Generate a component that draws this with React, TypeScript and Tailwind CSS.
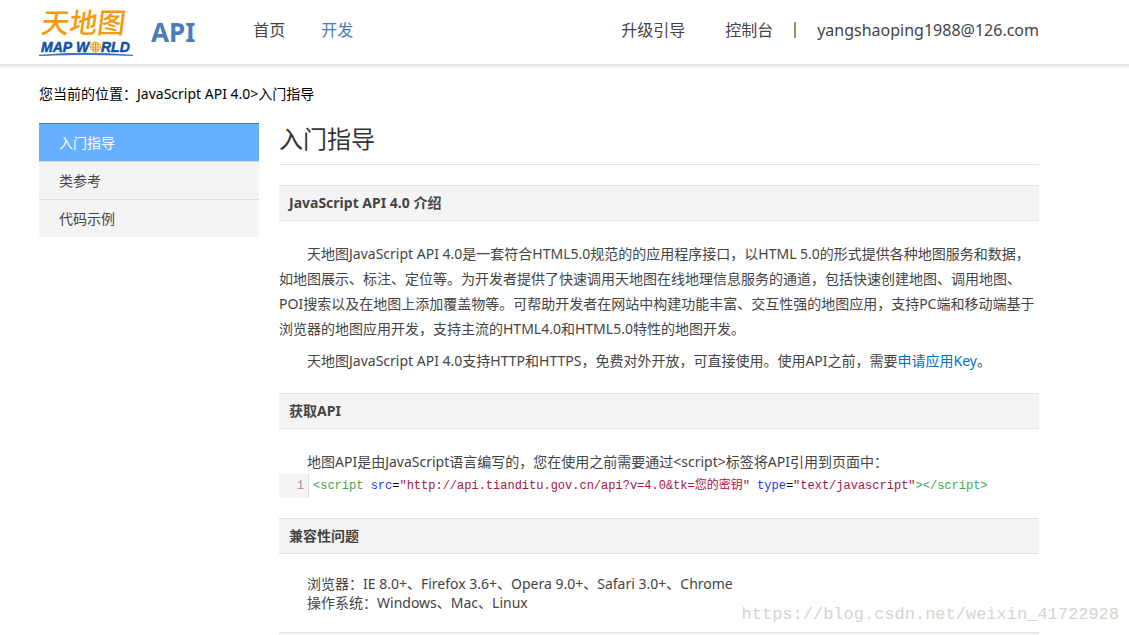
import type { ReactNode } from "react";

const menuLateral = ["入门指导", "类参考", "代码示例"];

function Logo() {
  return (
    <svg
      viewBox="0 0 96 64"
      className="h-16 w-24 shrink-0"
      role="img"
      aria-label="天地图 MAP WORLD"
    >
      <g
        fill="#f59a0c"
        fontWeight="500"
        fontFamily="'Noto Sans CJK SC', sans-serif"
        transform="skewX(-8)"
      >
        <text x="6" y="33" fontSize="28">
          天地图
        </text>
      </g>
      <g
        fill="#0f52a5"
        stroke="#0f52a5"
        strokeWidth="0.5"
        fontSize="14"
        fontWeight="700"
        fontStyle="italic"
        fontFamily="'Liberation Sans', sans-serif"
      >
        <text x="2" y="52">
          MAP
        </text>
        <text x="37" y="52">
          W
        </text>
        <text x="62" y="52">
          RLD
        </text>
      </g>
      <g fill="none" stroke="#f59a0c" strokeWidth="1">
        <ellipse cx="56.5" cy="47" rx="5.2" ry="4.8" fill="#fff" />
        <ellipse cx="56.5" cy="47" rx="2.4" ry="4.8" />
        <path d="M51.5 47h10M52.5 44.6h8M52.5 49.4h8M56.5 42.4v9.2" />
      </g>
      <path
        d="M0 55.4Q46 51 94 55.4Q46 53.4 0 55.4Z"
        fill="#0f52a5"
        stroke="#2a6fb8"
        strokeWidth="0.8"
      />
    </svg>
  );
}

function Cabecera() {
  return (
    <header className="border-b-2 border-[#e7e7e7] bg-white">
      <div className="mr-[90px] ml-[39px] flex h-16 items-center">
        <a href="#inicio" className="flex items-center">
          <Logo />
          <span className="ml-4 text-[26px] leading-8 font-bold text-[#4a7dba]">
            API
          </span>
        </a>
        <nav className="ml-[58px] flex gap-9 pb-1 text-base leading-6">
          <a href="#inicio">首页</a>
          <a href="#desarrollo" className="text-[#4a7dba]">
            开发
          </a>
        </nav>
        <div className="ml-auto flex items-center pb-1 text-base leading-6">
          <a href="#actualizar">升级引导</a>
          <a href="#consola" className="ml-10">
            控制台
          </a>
          <span className="mx-[21px] h-4 w-0.5 bg-[#b08a5a]" />
          <a href="#cuenta">yangshaoping1988@126.com</a>
        </div>
      </div>
    </header>
  );
}

function Titulo({ children }: { children: ReactNode }) {
  return (
    <h2 className="border-y border-[#e3e3e3] bg-[#f4f4f4] pl-[10px] text-sm leading-[34px] font-bold">
      {children}
    </h2>
  );
}

function Codigo() {
  return (
    <div className="flex font-['Liberation_Mono','Noto_Sans_CJK_SC',monospace] text-xs leading-6">
      <span className="w-[30px] shrink-0 border-r border-[#dddddd] bg-[#f4f4f4] pr-1 text-right text-[#999999]">
        1
      </span>
      <code className="pl-1 font-['Liberation_Mono','Noto_Sans_CJK_SC',monospace] whitespace-nowrap text-[#a31545]">
        <span className="text-[#3cab50]">&lt;script</span>{" "}
        <span className="text-[#1a3cff]">src</span>
        <span className="text-black">=</span>
        "http://api.tianditu.gov.cn/api?v=4.0&amp;tk=您的密钥"{" "}
        <span className="text-[#1a3cff]">type</span>
        <span className="text-black">=</span>"text/javascript"
        <span className="text-[#3cab50]">&gt;&lt;/script&gt;</span>
      </code>
    </div>
  );
}

function App() {
  return (
    <div className="relative bg-white font-['Noto_Sans','Noto_Sans_CJK_SC',sans-serif] text-[#444444]">
      <Cabecera />
      <div className="h-0.5 bg-[#f4f4f4]" />

      <div className="mr-[90px] ml-[39px]">
        <p className="pt-4 pb-[19px] text-sm leading-5 text-black">
          您当前的位置：JavaScript API 4.0&gt;入门指导
        </p>

        <div className="flex items-start gap-5">
          <aside className="w-[220px] shrink-0">
            <ul className="text-sm leading-[37px]">
              {menuLateral.map((item, i) => (
                <li key={item}>
                  <a
                    href={`#seccion-${i}`}
                    className={
                      i === 0
                        ? "block border-t border-[#3f7fbd] bg-[#66b0ff] pl-5 text-white"
                        : "block border-t border-[#dddddd] bg-[#f4f4f4] pl-5"
                    }
                  >
                    {item}
                  </a>
                </li>
              ))}
            </ul>
          </aside>

          <main className="min-w-0 flex-1">
            <h1 className="mb-5 border-b border-[#e3e3e3] pb-[9px] text-2xl leading-8 text-[#333333]">
              入门指导
            </h1>

            <Titulo>JavaScript API 4.0 介绍</Titulo>
            <div className="mt-5 mb-5 text-sm leading-[25px]">
              <p className="indent-7">
                天地图JavaScript API
                4.0是一套符合HTML5.0规范的的应用程序接口，以HTML
                5.0的形式提供各种地图服务和数据，如地图展示、标注、定位等。为开发者提供了快速调用天地图在线地理信息服务的通道，包括快速创建地图、调用地图、POI搜索以及在地图上添加覆盖物等。可帮助开发者在网站中构建功能丰富、交互性强的地图应用，支持PC端和移动端基于浏览器的地图应用开发，支持主流的HTML4.0和HTML5.0特性的地图开发。
              </p>
              <p className="mt-[7px] indent-7">
                天地图JavaScript API
                4.0支持HTTP和HTTPS，免费对外开放，可直接使用。使用API之前，需要
                <a href="#clave" className="text-[#0070c9]">
                  申请应用Key
                </a>
                。
              </p>
            </div>

            <Titulo>获取API</Titulo>
            <div className="mt-5 mb-5">
              <p className="indent-7 text-sm leading-[25px]">
                地图API是由JavaScript语言编写的，您在使用之前需要通过&lt;script&gt;标签将API引用到页面中：
              </p>
              <Codigo />
            </div>

            <Titulo>兼容性问题</Titulo>
            <div className="mt-5 mb-5 pl-7 text-sm leading-[19px]">
              <p>
                浏览器：IE 8.0+、Firefox 3.6+、Opera 9.0+、Safari 3.0+、Chrome
              </p>
              <p>操作系统：Windows、Mac、Linux</p>
            </div>

            <div className="h-[3px] border-t border-[#e3e3e3] bg-[#f4f4f4]" />
          </main>
        </div>
      </div>

      <p className="absolute right-2.5 bottom-2 font-['Liberation_Mono',monospace] text-[17px] leading-6 text-[#d5d5cd]">
        https://blog.csdn.net/weixin_41722928
      </p>
    </div>
  );
}

export default App;
